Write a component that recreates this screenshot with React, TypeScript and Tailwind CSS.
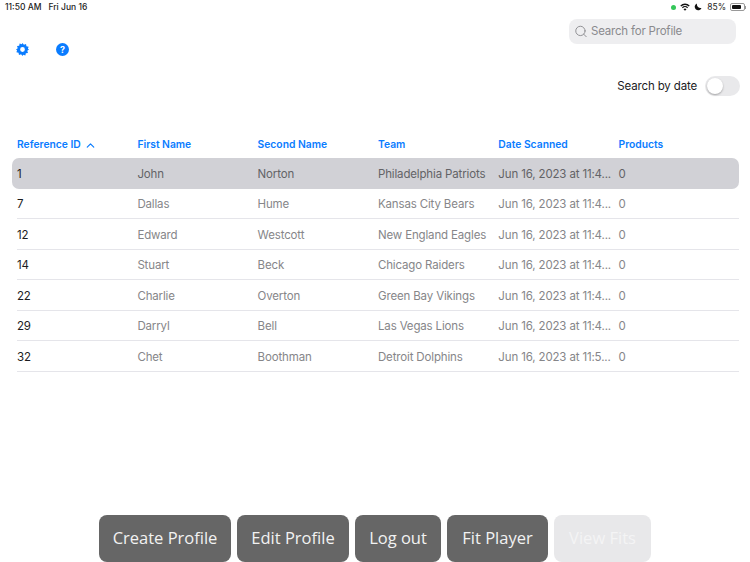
import { ChevronUp, Search } from 'lucide-react';

const rows = [
  { id: '1', first: 'John', second: 'Norton', team: 'Philadelphia Patriots', date: 'Jun 16, 2023 at 11:4...' },
  { id: '7', first: 'Dallas', second: 'Hume', team: 'Kansas City Bears', date: 'Jun 16, 2023 at 11:4...' },
  { id: '12', first: 'Edward', second: 'Westcott', team: 'New England Eagles', date: 'Jun 16, 2023 at 11:4...' },
  { id: '14', first: 'Stuart', second: 'Beck', team: 'Chicago Raiders', date: 'Jun 16, 2023 at 11:4...' },
  { id: '22', first: 'Charlie', second: 'Overton', team: 'Green Bay Vikings', date: 'Jun 16, 2023 at 11:4...' },
  { id: '29', first: 'Darryl', second: 'Bell', team: 'Las Vegas Lions', date: 'Jun 16, 2023 at 11:4...' },
  { id: '32', first: 'Chet', second: 'Boothman', team: 'Detroit Dolphins', date: 'Jun 16, 2023 at 11:5...' },
];

const buttons = [
  { label: 'Create Profile', width: 'w-[132px]' },
  { label: 'Edit Profile', width: 'w-[112px]' },
  { label: 'Log out', width: 'w-[86px]' },
  { label: 'Fit Player', width: 'w-[101px]' },
];

const columns = 'grid grid-cols-[120.4px_120.2px_120.4px_120.4px_120.2px_1fr]';

function GearIcon() {
  return (
    <svg width="13" height="13" viewBox="0 0 24 24" aria-hidden="true">
      <path
        fill="#0a7cff"
        fillRule="evenodd"
        d="M12 0l2.6 3.2 3.9-1.3.8 4 4 .8-1.3 3.9L24 12l-3.2 2.4 1.3 3.9-4 .8-.8 4-3.9-1.3L12 24l-2.6-3.2-3.9 1.3-.8-4-4-.8 1.3-3.9L0 12l3.2-2.4-1.3-3.9 4-.8.8-4 3.9 1.3L12 0zm0 7.6a4.4 4.4 0 1 0 0 8.8 4.4 4.4 0 0 0 0-8.8z"
      />
    </svg>
  );
}

function HelpIcon() {
  return (
    <div className="w-[13px] h-[13px] rounded-full bg-[#0a7cff] flex items-center justify-center text-white text-[9px] font-bold leading-none">
      ?
    </div>
  );
}

function StatusBar() {
  return (
    <div className="h-[14px] flex items-center justify-between pl-[5px] pr-[4px] text-[8.5px] text-[#222] leading-none">
      <div className="flex gap-[7px] font-medium">
        <span>11:50 AM</span>
        <span>Fri Jun 16</span>
      </div>
      <div className="flex items-center gap-[3px]">
        <div className="w-[5px] h-[5px] rounded-full bg-[#34c759]" />
        <svg width="10" height="8" viewBox="0 0 20 16" className="ml-[1px]" aria-hidden="true">
          <path fill="none" stroke="#111" strokeWidth="2.6" d="M1.5 6a12 12 0 0 1 17 0M4.8 9.4a7.4 7.4 0 0 1 10.4 0" />
          <path fill="#111" d="M10 15.5l-3-3.2a4.2 4.2 0 0 1 6 0z" />
        </svg>
        <svg width="8" height="8" viewBox="0 0 16 16" className="ml-[1px]" aria-hidden="true">
          <path fill="#111" d="M6 1a7 7 0 1 0 9 9A7.5 7.5 0 0 1 6 1z" />
        </svg>
        <span className="ml-[2px]">85%</span>
        <div className="ml-[1px] flex items-center">
          <div className="w-[15px] h-[8px] rounded-[2px] border border-[#999] p-[1px]">
            <div className="h-full w-[85%] rounded-[1px] bg-[#111]" />
          </div>
          <div className="w-[1px] h-[3px] bg-[#999]" />
        </div>
      </div>
    </div>
  );
}

export default function App() {
  return (
    <div className="w-[750px] h-[562px] bg-white flex flex-col overflow-hidden font-['Inter',sans-serif]">
      <StatusBar />

      <div className="flex justify-between items-start h-[48px] pl-[16px] pr-[14px]">
        <div className="flex gap-[27px] mt-[28.5px]">
          <GearIcon />
          <HelpIcon />
        </div>
        <div className="mt-[5px] w-[167px] h-[25px] rounded-[8px] bg-[#eeeef0] flex items-center gap-[3px] px-[5px] text-[11.5px] tracking-[-0.2px] text-[#8a8a8e]">
          <Search size={14} strokeWidth={1.6} className="shrink-0 -translate-y-[0.5px]" />
          <span className="pt-[1px]">Search for Profile</span>
        </div>
      </div>

      <div className="flex justify-end items-center gap-[8px] pr-[10px] mt-[14px] h-[20px]">
        <span className="pt-[1px] text-[11.5px] tracking-[-0.15px] text-[#1c1c1e]">Search by date</span>
        <div className="w-[35px] h-[20px] rounded-full bg-[#e9e9eb] p-[2px]">
          <div className="w-[16px] h-[16px] rounded-full bg-white shadow-[0_1px_2px_rgba(0,0,0,0.3)]" />
        </div>
      </div>

      <div className={`${columns} items-center mt-[37px] mb-[1px] px-[17px] h-[24px] text-[10.3px] font-semibold text-[#0a7cff]`}>
        <div className="flex items-center gap-[3px]">
          <span>Reference ID</span>
          <ChevronUp size={13} strokeWidth={2.2} />
        </div>
        <span>First Name</span>
        <span>Second Name</span>
        <span>Team</span>
        <span>Date Scanned</span>
        <span>Products</span>
      </div>

      <div className="mx-[12px] w-[727px]">
        {rows.map((row, i) => (
          <div
            key={row.id}
            className={`${columns} items-center h-[30.5px] pl-[5px] pt-[2px] text-[11.5px] tracking-[-0.15px] whitespace-nowrap ${
              i === 0 ? 'rounded-[7px] bg-[#d1d1d6] text-[#636366]' : 'relative text-[#868689]'
            }`}
          >
            <span className="text-[#1c1c1e]">{row.id}</span>
            <span>{row.first}</span>
            <span>{row.second}</span>
            <span>{row.team}</span>
            <span>{row.date}</span>
            <span>0</span>
            {i > 0 && <div className="absolute left-[5px] right-0 bottom-0 h-[1px] bg-[#e5e5ea]" />}
          </div>
        ))}
      </div>

      <div className="mt-auto flex gap-[6px] pl-[99px] text-[16.5px] font-medium font-['Open_Sans',sans-serif]">
        {buttons.map((b) => (
          <button
            key={b.label}
            className={`${b.width} h-[47px] rounded-[8px] bg-[#666666] text-[#f2f2f2] whitespace-nowrap`}
          >
            {b.label}
          </button>
        ))}
        <button className="w-[97px] h-[47px] rounded-[8px] bg-[#e8e8ea] text-[#f4f4f5]">View Fits</button>
      </div>
    </div>
  );
}
